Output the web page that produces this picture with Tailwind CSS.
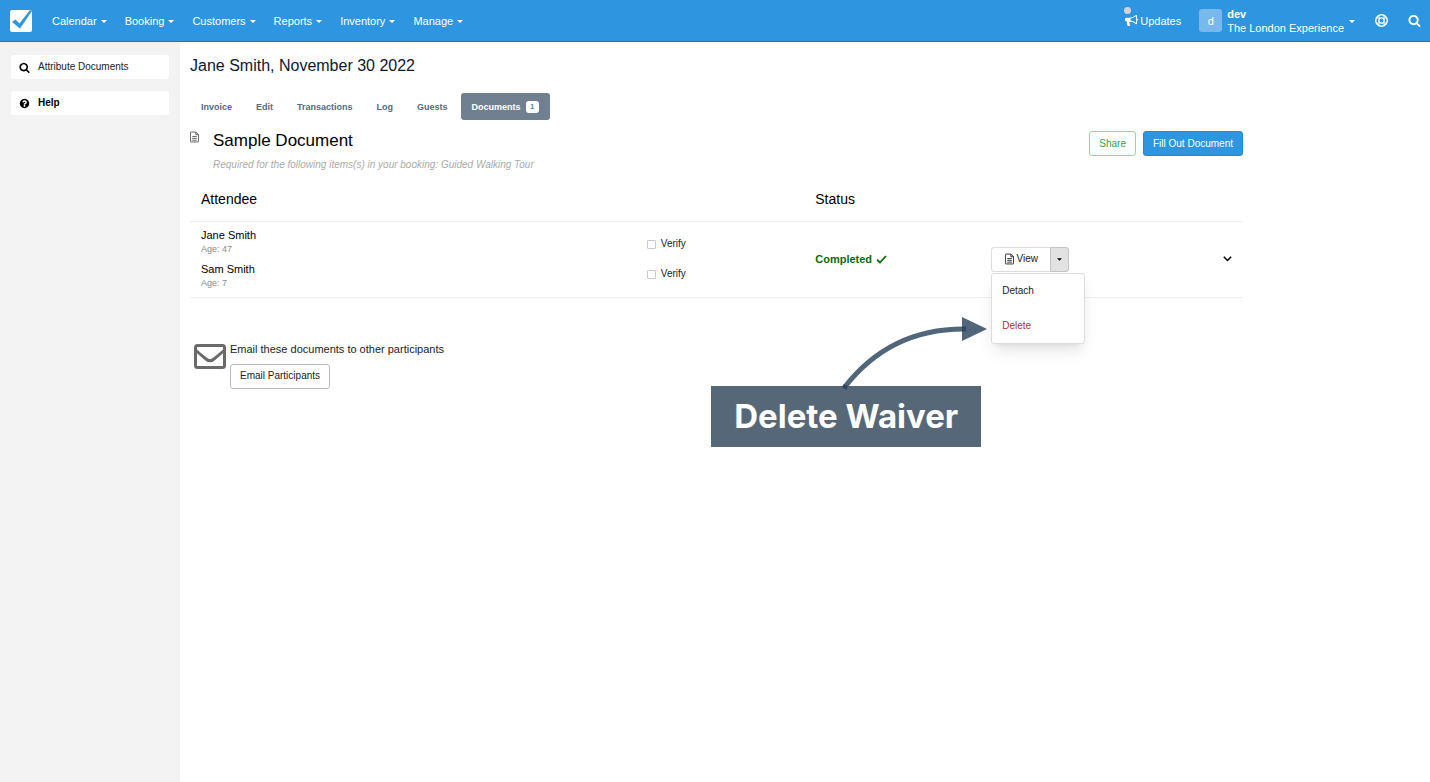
<!DOCTYPE html>
<html lang="en">

<head>
    <meta charset="UTF-8">
    <meta name="viewport" content="width=device-width, initial-scale=1.0">
    <title>Jane Smith, November 30 2022</title>
    <script src="https://cdn.jsdelivr.net/npm/@tailwindcss/browser@4"></script>
</head>

<body class="min-h-screen flex flex-col bg-white font-['Liberation_Sans',Arial,sans-serif] text-[10px] leading-[14px] text-[#222]">
    <!-- icons used more than once -->
    <svg class="hidden">
        <symbol id="caret" viewBox="0 0 6 3">
            <path d="M0 0h6L3 3z" fill="currentColor" />
        </symbol>
        <symbol id="search" viewBox="0 0 1792 1792">
            <path fill="currentColor" d="M1216 832q0-185-131.5-316.5t-316.5-131.5-316.5 131.5-131.5 316.5 131.5 316.5 316.5 131.5 316.5-131.5 131.5-316.5zm512 832q0 52-38 90t-90 38q-54 0-90-38l-343-342q-179 124-399 124-143 0-273.5-55.5t-225-150-150-225-55.5-273.5 55.5-273.5 150-225 225-150 273.5-55.5 273.5 55.5 225 150 150 225 55.5 273.5q0 220-124 399l343 343q37 37 37 90z" />
        </symbol>
        <symbol id="file" viewBox="0 0 10 12">
            <path fill="none" stroke="currentColor" d="M.5 1q0-.5.5-.5h5.500l3 3V11q0 .5-.5.500H1q-.5 0-.5-.5zM6.500.500v3h3M2.500 5.500h5M2.500 7.500h5M2.500 9.500h5" />
        </symbol>
    </svg>

    <!-- top bar -->
    <header class="h-[42px] flex items-center justify-between bg-[#2e96e0] border-b border-[#1c77bd] text-white text-[11px] pl-[10px] pr-[9px]">
        <div class="flex items-center">
            <a href="#" aria-label="Home">
                <svg class="w-[22px] h-[23px]" viewBox="0 0 22 23">
                    <rect y="1" width="22" height="22" rx="2" fill="#fff" />
                    <path d="M2 13l3.500-2.500 4 4L20 1l2 1L10 19.500z" fill="#2e96e0" />
                </svg>
            </a>
            <nav class="flex items-center gap-[18px] ml-[20px]">
                <button class="flex items-center gap-1">Calendar <svg class="w-[6px] h-[3px] mt-[2px]"><use href="#caret" /></svg></button>
                <button class="flex items-center gap-1">Booking <svg class="w-[6px] h-[3px] mt-[2px]"><use href="#caret" /></svg></button>
                <button class="flex items-center gap-1">Customers <svg class="w-[6px] h-[3px] mt-[2px]"><use href="#caret" /></svg></button>
                <button class="flex items-center gap-1">Reports <svg class="w-[6px] h-[3px] mt-[2px]"><use href="#caret" /></svg></button>
                <button class="flex items-center gap-1">Inventory <svg class="w-[6px] h-[3px] mt-[2px]"><use href="#caret" /></svg></button>
                <button class="flex items-center gap-1">Manage <svg class="w-[6px] h-[3px] mt-[2px]"><use href="#caret" /></svg></button>
            </nav>
        </div>
        <div class="flex items-center">
            <a href="#" class="relative flex items-center gap-[2px]">
                <span class="absolute -left-[1px] -top-[7px] w-[7px] h-[7px] rounded-full bg-[#d3d3d8]"></span>
                <svg class="w-[13px] h-[13px]" viewBox="0 0 1792 1792">
                    <path fill="currentColor" d="M1664 640q53 0 90.5 37.5t37.5 90.5-37.5 90.5-90.5 37.5v384q0 52-38 90t-90 38q-417-347-812-380-58 19-91 66t-31 100.5 40 92.5q-20 33-23 65.5t6 58 33.5 55 48 50 61.5 50.5q-29 58-111.5 83t-168.5 11.5-132-55.5q-7-23-29.5-87.5t-32-94.5-23-89-15-101 3.5-98.5 22-110.5h-122q-66 0-113-47t-47-113v-192q0-66 47-113t113-47h480q435 0 896-384 52 0 90 38t38 90v384zm-128 604v-954q-394 302-768 343v270q377 42 768 341z" />
                </svg>
                Updates
            </a>
            <button class="flex items-center text-left ml-[18px]">
                <span class="w-[23px] h-[23px] rounded-[3px] bg-[#78b8ec] flex items-center justify-center">d</span>
                <span class="ml-[5px]"><b class="block">dev</b>The London Experience</span>
                <svg class="w-[6px] h-[3px] ml-[5px] mt-[2px]"><use href="#caret" /></svg>
            </button>
            <a href="#" aria-label="Support" class="ml-[20px]">
                <svg class="w-[13px] h-[13px]" viewBox="0 0 13 13" fill="none" stroke="currentColor">
                    <circle cx="6.500" cy="6.500" r="5.800" stroke-width="1.400" />
                    <circle cx="6.500" cy="6.500" r="2.700" stroke-width="1.300" />
                    <path d="M4 1.200v3.400M9 1.200v3.400M4 8.400v3.400M9 8.400v3.400M1.200 4h3.400M1.200 9h3.400M8.400 4h3.400M8.400 9h3.400" stroke-width=".9" />
                </svg>
            </a>
            <button aria-label="Search" class="ml-[20px]"><svg class="w-[13px] h-[13px]"><use href="#search" /></svg></button>
        </div>
    </header>

    <div class="flex flex-1">
        <!-- sidebar -->
        <aside class="w-[180px] shrink-0 bg-[#f3f3f3] px-[11px] py-[13px] flex flex-col gap-[12px]">
            <a href="#" class="h-[24px] flex items-center gap-2 bg-white rounded-[3px] px-2">
                <svg class="w-[11px] h-[11px] text-black"><use href="#search" /></svg>
                Attribute Documents
            </a>
            <a href="#" class="h-[24px] flex items-center gap-2 bg-white rounded-[3px] px-2 font-bold text-black">
                <svg class="w-[11px] h-[11px]" viewBox="0 0 1792 1792">
                    <path fill="currentColor" d="M1024 1376v-192q0-14-9-23t-23-9h-192q-14 0-23 9t-9 23v192q0 14 9 23t23 9h192q14 0 23-9t9-23zm256-672q0-88-55.5-163t-138.5-116-170-41q-243 0-371 213-15 24 8 42l132 100q7 6 19 6 16 0 25-12 53-68 86-92 34-24 86-24 48 0 85.5 26t37.5 59q0 38-20 61t-68 45q-63 28-115.5 86.5t-52.5 125.5v36q0 14 9 23t23 9h192q14 0 23-9t9-23q0-19 21.5-49.5t54.5-49.5q32-18 49-28.5t46-35 44.5-48 28-60.5 12.5-81zm384 192q0 209-103 385.500t-279.500 279.500-385.500 103-385.500-103-279.500-279.500-103-385.500 103-385.500 279.500-279.500 385.500-103 385.500 103 279.500 279.500 103 385.500z" />
                </svg>
                Help
            </a>
        </aside>

        <main class="flex-1 pl-[10px] pr-[187px] pt-[14px]">
            <h1 class="text-[16px] leading-[20px] text-[#0d1830]">Jane Smith, November 30 2022</h1>

            <nav class="flex mt-[17px] gap-[2px] text-[9px] font-bold text-[#566a82]">
                <a href="#" class="h-[27px] px-[11px] flex items-center">Invoice</a>
                <a href="#" class="h-[27px] px-[11px] flex items-center">Edit</a>
                <a href="#" class="h-[27px] px-[11px] flex items-center">Transactions</a>
                <a href="#" class="h-[27px] px-[11px] flex items-center">Log</a>
                <a href="#" class="h-[27px] px-[11px] flex items-center">Guests</a>
                <a href="#" class="h-[27px] px-[11px] flex items-center gap-[5px] bg-[#718091] text-white rounded-[3px]">
                    Documents
                    <span class="w-[13px] h-[12px] rounded-[3px] bg-white text-[#3b82c4] text-[7px] leading-[12px] text-center">1</span>
                </a>
            </nav>

            <!-- document heading -->
            <section class="flex items-start mt-[11px]">
                <svg class="w-[9px] h-[12px] text-[#555]"><use href="#file" /></svg>
                <div class="ml-[14px] flex-1">
                    <h2 class="text-[17px] leading-[20px] text-black">Sample Document</h2>
                    <p class="mt-[7px] italic text-[#aaa]">Required for the following items(s) in your booking: Guided Walking Tour</p>
                </div>
                <div class="flex gap-[7px]">
                    <button class="h-[25px] px-[9px] border border-[#9fd3ab] rounded-[3px] text-[#28a745]">Share</button>
                    <button class="h-[25px] px-[9px] border border-[#2389d3] rounded-[3px] bg-[#2e96e0] text-white">Fill Out Document</button>
                </div>
            </section>

            <table class="w-full table-fixed mt-[6px]">
                <thead>
                    <tr class="h-[43px] border-b border-[#eee] text-[14px] text-black text-left">
                        <th class="w-[43%] px-[11px] font-normal">Attendee</th>
                        <th class="w-[16%]"></th>
                        <th class="w-[17%] px-1 font-normal">Status</th>
                        <th class="w-[12%]"></th>
                        <th></th>
                    </tr>
                </thead>
                <tbody>
                    <tr class="h-[76px] border-b border-[#eee]">
                        <td class="px-[11px]">
                            <div class="flex flex-col gap-[6px]">
                                <div>
                                    <p class="text-[11px] text-black">Jane Smith</p>
                                    <p class="text-[9px] text-[#888]">Age: 47</p>
                                </div>
                                <div>
                                    <p class="text-[11px] text-black">Sam Smith</p>
                                    <p class="text-[9px] text-[#888]">Age: 7</p>
                                </div>
                            </div>
                        </td>
                        <td class="px-1">
                            <div class="flex flex-col gap-[16px]">
                                <label class="flex items-center gap-[5px]"><input type="checkbox" class="appearance-none w-[9px] h-[9px] border border-[#c8c8d2] rounded-[1px]">Verify</label>
                                <label class="flex items-center gap-[5px]"><input type="checkbox" class="appearance-none w-[9px] h-[9px] border border-[#c8c8d2] rounded-[1px]">Verify</label>
                            </div>
                        </td>
                        <td class="px-1">
                            <span class="flex items-center gap-1 text-[11px] font-bold text-[#0b6b0b]">
                                Completed
                                <svg class="w-[11px] h-[9px]" viewBox="0 0 11 9">
                                    <path d="M1 4.700l2.900 2.800L10 1" fill="none" stroke="currentColor" stroke-width="1.800" />
                                </svg>
                            </span>
                        </td>
                        <td class="px-px">
                            <div class="relative w-[78px] flex">
                                <button class="flex-1 h-[25px] flex items-center justify-center gap-[3px] border border-r-0 border-[#ddd] rounded-l-[3px]">
                                    <svg class="w-[9px] h-[12px]"><use href="#file" /></svg>View
                                </button>
                                <button aria-label="More actions" class="w-[19px] h-[25px] flex items-center justify-center bg-[#e2e2e2] border border-[#c4c4c4] rounded-r-[3px] text-black">
                                    <svg class="w-[5px] h-[3px]"><use href="#caret" /></svg>
                                </button>
                                <!-- open menu -->
                                <div class="absolute left-0 top-[26px] w-[94px] h-[71px] z-10 flex flex-col bg-white border border-[#ddd] rounded-[3px] shadow-lg px-[10px] py-[10px] justify-between">
                                    <a href="#">Detach</a>
                                    <a href="#" class="text-[#b03030]">Delete</a>
                                </div>
                                <!-- callout -->
                                <div class="absolute right-full top-[69px] mr-[4px] w-[276px]">
                                    <svg class="ml-auto w-[146px] h-[76px] -mb-[6px] relative" viewBox="0 0 146 76">
                                        <path d="M3 72Q49 12 125 13" fill="none" stroke="#52667a" stroke-width="5" />
                                        <path d="M121 1l25 12-25 12z" fill="#52667a" />
                                        <path d="M121 10.500h4v5h-4z" fill="#2f475e" />
                                        <path d="M1 71l4 3 2-4-4-2z" fill="#2f475e" />
                                    </svg>
                                    <div class="w-[270px] h-[61px] flex items-center justify-center bg-[#566778] text-white font-['Inter',sans-serif] font-bold text-[33px] leading-[40px] whitespace-nowrap">Delete Waiver</div>
                                </div>
                            </div>
                        </td>
                        <td class="px-[11px] text-right">
                            <button aria-label="Expand row" class="align-middle">
                                <svg class="w-[9px] h-[6px]" viewBox="0 0 9 6"><path d="M.8.800l3.700 3.700L8.200.800" fill="none" stroke="#000" stroke-width="1.500" /></svg>
                            </button>
                        </td>
                    </tr>
                </tbody>
            </table>

            <section class="flex items-start gap-1 mt-[44px] pl-1">
                <svg class="w-[32px] h-[25px] mt-[2px]" viewBox="0 0 32 25" fill="none" stroke="#6a6a6a" stroke-width="3">
                    <rect x="1.500" y="1.500" width="29" height="22" rx="2" />
                    <path d="M2 6.500q5 4.500 10 8.500 4 3.500 8 0 5-4 10-8.500" />
                </svg>
                <div>
                    <p class="text-[11px]">Email these documents to other participants</p>
                    <button class="mt-[8px] h-[25px] px-[9px] border border-[#bbb] rounded-[3px]">Email Participants</button>
                </div>
            </section>
        </main>
    </div>
</body>

</html>
